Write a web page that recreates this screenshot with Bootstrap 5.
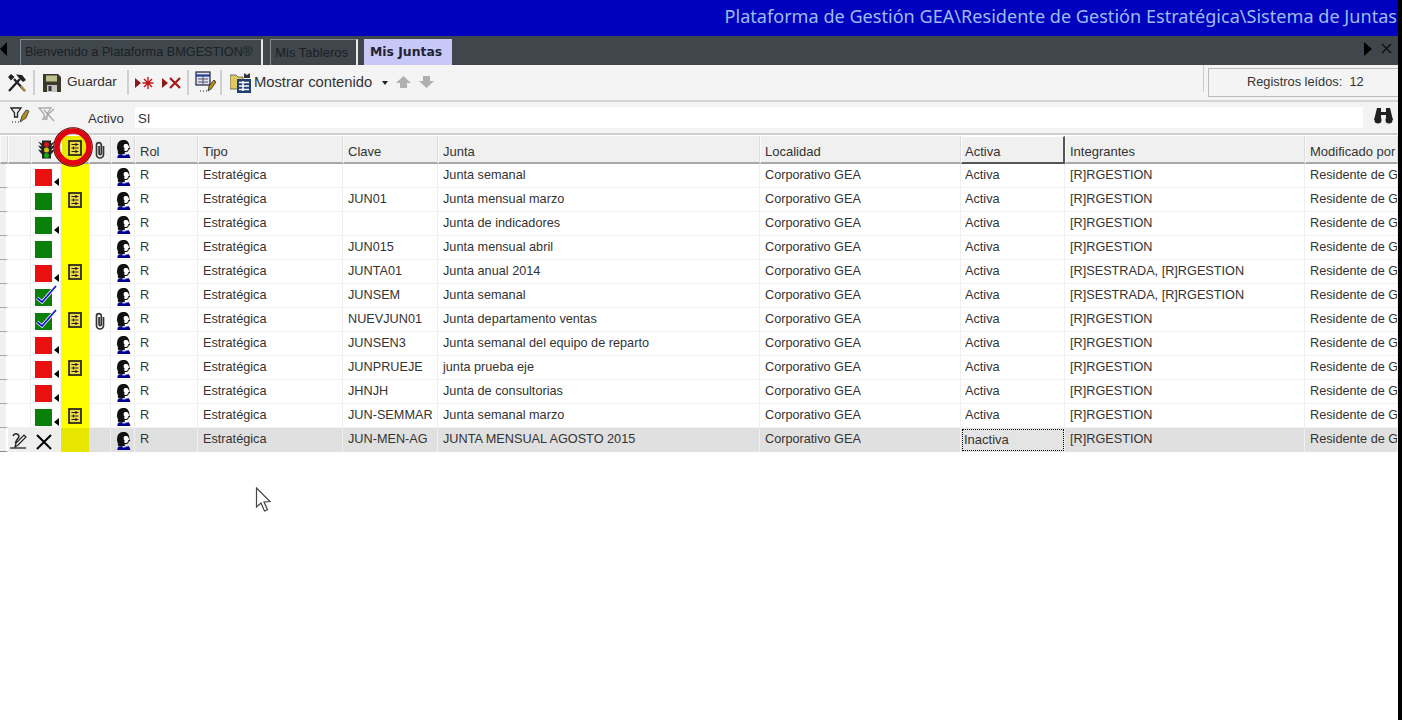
<!DOCTYPE html>
<html lang="es"><head><meta charset="utf-8"><title>Mis Juntas</title>
<link href="https://cdn.jsdelivr.net/npm/bootstrap@5.3.0/dist/css/bootstrap.min.css" rel="stylesheet">
<style>
html,body{height:720px;overflow:hidden;background:#fff}
body{font-family:"Liberation Sans",Arial,sans-serif;font-size:13px;color:#333;position:relative;width:1402px}
.app{width:1398px}
.edge{position:absolute;top:0;right:0;width:4px;height:720px;background:#000}
.ttl{height:36px;background:#0000bf;color:#9dbcec;font-family:"Noto Sans",sans-serif;font-size:18.1px;line-height:33px;padding-right:1px;white-space:nowrap}
.tabbar{height:29px;background:#3f474c;padding:3px 0 0 0}
.tb{height:26px;line-height:25px;font-size:12.7px;padding:0 9px 0 4px;margin-right:7px;color:#1b2024;border-top:1px solid #858d94;border-left:1px solid #858d94;border-right:2px solid #e8e8e8}
.tb2{font-size:13px;padding-right:8px;margin-right:6px}
.tb.on{background:#c8c8f8;color:#223;font-weight:700;border:0;line-height:26px;padding:0 10px 0 6px;font-family:"DejaVu Sans",sans-serif;font-size:12.4px;margin:0}
.arl,.arr,.car{width:0;height:0;border-style:solid;display:block}
.arl{border-width:7px 7px 7px 0;border-color:transparent #000 transparent transparent;margin:3px 13px 0 0}
.arr{border-width:7px 0 7px 8px;border-color:transparent transparent transparent #000;margin:3px 8px 0 auto}
.xcl{margin:3px 5px 0 0}
.car{border-width:4px 3.5px 0;border-color:#222 transparent transparent;margin:1px 0 0 10px}
.tools{height:37px;background:#f4f4f4;border-bottom:2px solid #d4d4d4;color:#333;padding:0 0 0 7px}
.tgu{font-size:13.6px;margin-left:6px}
.tmo{font-size:14.8px;margin-left:3px}
.sepv{width:2px;height:25px;background:#d0d0d0;display:block}
.s1{margin:0 4px 0 6px}.s2{margin:0 6px 0 10px}.s3{margin:0 6px 0 6px}.s4{margin:0 8px 0 4px}
.m8{margin-left:8px}.m4{margin-left:4px}
.cnt{width:190px;height:29px;margin-left:auto;border:1px solid #bbb;border-right:0;background:#f4f4f4;font-size:12.8px;line-height:26px;padding-left:38px;position:relative;top:0;box-shadow:-5px -4px 0 -1px #f4f4f4,-6px -4px 0 -1px #ccc}
.filt{height:33px;background:#f3f3f3;border-bottom:2px solid #cfcfcf;padding-top:5px}
.fval{height:21px;width:1228px;background:#fff;line-height:24px;padding-left:3px;font-size:13.2px;margin-left:11px}
.lbl{font-size:13.2px;line-height:24px;margin-left:30px}
.f1{margin-left:10px}.f2{margin-left:8px}.f3{margin-left:10px}
.grid{table-layout:fixed;border-collapse:separate;border-spacing:0;width:1398px;margin-top:1px}
.grid th,.grid td{padding:0 0 0 5px;overflow:hidden;white-space:nowrap;font-weight:400;font-size:12.7px;vertical-align:top;line-height:23px}
.grid th{height:28px;background:#f0f0f0;border-right:1px solid #dcdcdc;border-bottom:2px solid #a8a8a8;font-size:13px;line-height:21px;padding:5px 0 0 4px;border-left:1px solid #fafafa}
.grid td{height:24px;border-right:1px solid #f0f0f0;border-bottom:1px solid #f2f2f2}
.grid td.ic,.grid th.ic{padding:0;text-align:center;position:relative}
.grid td.mk{background:#f0f0f0;border-bottom:1px solid #a8a8a8;border-right:2px solid #fff;padding:0}
.grid td.ye{background:#ff0;border-bottom-color:#ff0;border-right-color:#ff0}
.grid th.ye{background:#e9e900}
.grid tr.cur td{background:#e0e0e0;border-bottom:0}
.grid tr.cur td.ye{background:#e6e600;border-right-color:#e6e600}
.grid tr.cur td.xc{background:#eee}
.grid tr.cur td.mk{background:#f0f0f0;border-bottom:1px solid #888}
.grid td.est{padding-left:4px}
.grid tr.cur td.dot{outline:1px dotted #000;outline-offset:-2px;background:#e4e4e4;padding-left:3px;font-size:13px}
.grid th.act{border:1px solid #fff;border-right:2px solid #555;border-bottom:2px solid #555;padding:4px 0 0 3px}
.sq{display:block;width:17px;height:17px;margin:5px 0 0 4px}
.red{background:#e81010}.grn{background:#0a800a}
.tri{position:absolute;left:23px;top:14px;width:0;height:0;border:4.5px solid transparent;border-left:0;border-right:5.5px solid #000}
.ring{position:absolute;left:52px;top:126px;pointer-events:none}
.cursorx{position:absolute;left:255px;top:487px}
.i{display:block}
th .i,td.ic .i{margin:0 auto}
th .tl{margin-top:3px}th .nt{margin-top:4px}th .cp{margin-top:5px}th .fc{margin-top:4px}
td.ic .nt{margin-top:4px}
td.ic .cp{margin-top:4px}
td.ic .fc{margin-top:4px;position:relative;left:1px}
th.ic .fc{position:relative;left:1px}
td.ic .ck{margin:0 0 0 4px}
td.ic .ed{margin:3px 0 0 0}
td.ic .xx{margin:6px 0 0 5px}
.c0{width:8px}.c1{width:23px}.c2{width:30px}.c3{width:28px}.c4{width:22px}.c5{width:24px}.c6{width:63px}.c7{width:145px}.c8{width:95px}.c9{width:322px}.c10{width:201px}.c11{width:104px}.c12{width:240px}.c13{width:93px}
</style></head><body>
<svg width="0" height="0" class="position-absolute">
<defs>
<symbol id="note" viewBox="0 0 14 16"><rect x="1" y="1" width="12" height="14" fill="#eedc40" stroke="#222" stroke-width="1.700"/><path d="M3.500 4.500h7M3.500 8h7M3.500 11.500h7" stroke="#222" stroke-width="1.200"/><path d="M8 3v3M5.500 6.500v3M8 10v3" stroke="#222" stroke-width="1.100"/></symbol>
<symbol id="face" viewBox="0 0 14 18"><path d="M7 0C3 0 .5 2 .3 5.500-.5 8 .3 10 1 11.500c-.6 1.500 0 3 2 3.300h4l1-2.500 3-.8.800-2 1.500-.8-1-2.300C12.500 3 10.500 0 7 0z" fill="#111"/><path d="M7 4.500c2-.8 3.800-.5 4.300 1l1.200 2.300-1.500.7c0 1.500-.5 2.500-2.200 2.500-1 0-1.600-.5-1.600-1.500.8-.8.3-1.800-.6-2.300 0-1 .2-1.900.4-2.700z" fill="#fff"/><path d="M1 15l4.500-.5 1.500-1.500 1.500 1.800 3.500-.6L13.500 18H.2z" fill="#000090"/><path d="M5.500 14.800h3" stroke="#fff" stroke-width="1.200"/></symbol>
<symbol id="clip" viewBox="0 0 12 18"><path d="M9.500 5v8.500a3.500 3.500 0 0 1-7 0V4a2.400 2.400 0 0 1 4.800 0v8.500a1.100 1.100 0 0 1-2.200 0V5" fill="none" stroke="#333" stroke-width="1.700"/></symbol>
<symbol id="chk" viewBox="0 0 24 22"><rect x="0" y="5" width="17" height="17" fill="#0a800a"/><path d="M2 14l5 4L21 2" fill="none" stroke="#fff" stroke-width="3.400"/><path d="M2 14l5 4L21 2" fill="none" stroke="#1414d0" stroke-width="1.800"/></symbol>
</defs></svg>
<div class="app">
<div class="ttl text-end">Plataforma de Gestión GEA\Residente de Gestión Estratégica\Sistema de Juntas</div>
<div class="tabbar d-flex align-items-start">
<span class="arl"></span>
<span class="tb">Bienvenido a Plataforma BMGESTION®</span>
<span class="tb tb2">Mis Tableros</span>
<span class="tb on">Mis Juntas</span>
<span class="arr"></span>
<svg class="xcl" width="13" height="13" viewBox="0 0 13 13"><path d="M2 2l9 9M11 2l-9 9" stroke="#111" stroke-width="1.500"/></svg>
</div>
<div class="tools d-flex align-items-center">
<svg width="20" height="20" viewBox="0 0 20 20"><path d="M2 18L13 6M18 18L7 6" stroke="#222" stroke-width="2.300"/><path d="M9 1.500l6 .5 4 5-3 2-4-4zM1 4l3-3 3.500 3L4 7.500z" fill="#222"/><path d="M14 13l4 5" stroke="#b89a30" stroke-width="2"/></svg>
<span class="sepv s1"></span>
<svg class="m4" width="18" height="18" viewBox="0 0 18 18"><path d="M0 0h15l3 3v15H0z" fill="#3a3a2a"/><rect x="3" y="1.500" width="11" height="6" fill="#bfc090"/><rect x="4" y="11" width="10" height="7" fill="#c4c4c4"/><rect x="5.500" y="12" width="3" height="5" fill="#333"/></svg>
<span class="tgu">Guardar</span>
<span class="sepv s2"></span>
<svg width="19" height="14" viewBox="0 0 19 14"><path d="M0 2l6 5-6 5z" fill="#8c1a1a"/><path d="M13 1v12M7.500 7h11M9 3l8 8M17 3l-8 8" stroke="#c01818" stroke-width="1.400"/></svg>
<svg class="m8" width="19" height="14" viewBox="0 0 19 14"><path d="M0 2l6 5-6 5z" fill="#8c1a1a"/><path d="M8 2l10 10M18 2L8 12" stroke="#a81818" stroke-width="2.200"/></svg>
<span class="sepv s3"></span>
<svg width="21" height="23" viewBox="0 0 21 23"><rect x="1" y="1" width="14" height="13" fill="#dfe2f2" stroke="#223" stroke-width="1.200"/><path d="M1 4.500h14" stroke="#223a90" stroke-width="2.200"/><path d="M3 8h10M3 11h10M8 5v8" stroke="#556" stroke-width="1"/><path d="M13 20l1-5 5-6 2 2-5 7z" fill="#b89020" stroke="#222" stroke-width=".8"/><path d="M5 20h1M8 20h1M11 20h1" stroke="#222"/></svg>
<span class="sepv s4"></span>
<svg width="21" height="21" viewBox="0 0 21 21"><path d="M0 3h6l2 2h5v12H0z" fill="#e0c860" stroke="#555" stroke-width=".8"/><rect x="7" y="7" width="14" height="14" fill="#22406e"/><path d="M9 10.500h10M9 14h10M9 17.500h10M13 9v10" stroke="#fff" stroke-width="1.500"/><path d="M14 1l3 2 3-2v5h-6z" fill="#333"/></svg>
<span class="tmo">Mostrar contenido</span>
<span class="car"></span>
<svg class="m8" width="15" height="13" viewBox="0 0 15 13"><path d="M7.500 0L15 7h-4v5H4V7H0z" fill="#b0b0b0"/></svg>
<svg class="m8" width="15" height="13" viewBox="0 0 15 13"><path d="M7.500 12L15 5h-4V0H4v5H0z" fill="#b0b0b0"/></svg>
<div class="cnt">Registros leídos:&nbsp; 12</div>
</div>
<div class="filt d-flex align-items-start">
<svg class="f1" width="20" height="18" viewBox="0 0 20 18"><path d="M1 1h10L7.500 6v4h-3V6z" fill="#eee" stroke="#222" stroke-width="1.300"/><path d="M10 15l2-6 4-6 3 1-3 7z" fill="#b09020" stroke="#222" stroke-width=".7"/><path d="M2 15h1M5 15h1M8 15h1" stroke="#222"/></svg>
<svg class="f2" width="20" height="18" viewBox="0 0 20 18"><path d="M1 1h12L9 7v5H6V7zM4 13L16 2M6 3l10 11" fill="none" stroke="#aaa" stroke-width="1.300"/></svg>
<span class="lbl">Activo</span>
<div class="fval">SI</div>
<svg class="f3" width="21" height="17" viewBox="0 0 21 17"><path d="M4 1h4v4h5V1h4l3 12h-7V8H8v5H1z" fill="#222"/><circle cx="5" cy="13" r="3.500" fill="#222"/><circle cx="16" cy="13" r="3.500" fill="#222"/></svg>
</div>
<table class="grid">
<colgroup><col class="c0"><col class="c1"><col class="c2"><col class="c3"><col class="c4"><col class="c5"><col class="c6"><col class="c7"><col class="c8"><col class="c9"><col class="c10"><col class="c11"><col class="c12"><col class="c13"></colgroup>
<thead><tr><th class="ic"></th><th class="ic"></th>
<th class="ic"><svg class="i tl" width="17" height="22" viewBox="0 0 17 21"><path d="M0 2l4 2V1h9v3l4-2-4 5 4-1-4 5 4-1-4 5v4H4v-4L0 10l4 1L0 6l4 1z" fill="#222"/><circle cx="8.500" cy="5" r="2.500" fill="#d81818"/><circle cx="8.500" cy="10.500" r="2.500" fill="#d8c010"/><circle cx="8.500" cy="16" r="2.500" fill="#10b010"/></svg></th>
<th class="ic ye"><svg class="i nt" width="14" height="16"><use href="#note"/></svg></th>
<th class="ic"><svg class="i cp" width="12" height="18"><use href="#clip"/></svg></th>
<th class="ic"><svg class="i fc" width="14" height="18"><use href="#face"/></svg></th>
<th>Rol</th><th>Tipo</th><th>Clave</th><th>Junta</th><th>Localidad</th><th class="act">Activa</th><th>Integrantes</th><th>Modificado por</th></tr></thead>
<tbody>
<tr><td class="mk"></td><td></td><td class="ic"><span class="sq red"></span><span class="tri"></span></td><td class="ic ye"></td><td class="ic"></td><td class="ic"><svg class="i fc" width="14" height="18"><use href="#face"/></svg></td><td>R</td><td>Estratégica</td><td></td><td>Junta semanal</td><td>Corporativo GEA</td><td class="est">Activa</td><td>[R]RGESTION</td><td>Residente de G</td></tr>
<tr><td class="mk"></td><td></td><td class="ic"><span class="sq grn"></span></td><td class="ic ye"><svg class="i nt" width="14" height="16"><use href="#note"/></svg></td><td class="ic"></td><td class="ic"><svg class="i fc" width="14" height="18"><use href="#face"/></svg></td><td>R</td><td>Estratégica</td><td>JUN01</td><td>Junta mensual marzo</td><td>Corporativo GEA</td><td class="est">Activa</td><td>[R]RGESTION</td><td>Residente de G</td></tr>
<tr><td class="mk"></td><td></td><td class="ic"><span class="sq grn"></span><span class="tri"></span></td><td class="ic ye"></td><td class="ic"></td><td class="ic"><svg class="i fc" width="14" height="18"><use href="#face"/></svg></td><td>R</td><td>Estratégica</td><td></td><td>Junta de indicadores</td><td>Corporativo GEA</td><td class="est">Activa</td><td>[R]RGESTION</td><td>Residente de G</td></tr>
<tr><td class="mk"></td><td></td><td class="ic"><span class="sq grn"></span></td><td class="ic ye"></td><td class="ic"></td><td class="ic"><svg class="i fc" width="14" height="18"><use href="#face"/></svg></td><td>R</td><td>Estratégica</td><td>JUN015</td><td>Junta mensual abril</td><td>Corporativo GEA</td><td class="est">Activa</td><td>[R]RGESTION</td><td>Residente de G</td></tr>
<tr><td class="mk"></td><td></td><td class="ic"><span class="sq red"></span><span class="tri"></span></td><td class="ic ye"><svg class="i nt" width="14" height="16"><use href="#note"/></svg></td><td class="ic"></td><td class="ic"><svg class="i fc" width="14" height="18"><use href="#face"/></svg></td><td>R</td><td>Estratégica</td><td>JUNTA01</td><td>Junta anual 2014</td><td>Corporativo GEA</td><td class="est">Activa</td><td>[R]SESTRADA, [R]RGESTION</td><td>Residente de G</td></tr>
<tr><td class="mk"></td><td></td><td class="ic"><svg class="i ck" width="24" height="22"><use href="#chk"/></svg></td><td class="ic ye"></td><td class="ic"></td><td class="ic"><svg class="i fc" width="14" height="18"><use href="#face"/></svg></td><td>R</td><td>Estratégica</td><td>JUNSEM</td><td>Junta semanal</td><td>Corporativo GEA</td><td class="est">Activa</td><td>[R]SESTRADA, [R]RGESTION</td><td>Residente de G</td></tr>
<tr><td class="mk"></td><td></td><td class="ic"><svg class="i ck" width="24" height="22"><use href="#chk"/></svg></td><td class="ic ye"><svg class="i nt" width="14" height="16"><use href="#note"/></svg></td><td class="ic"><svg class="i cp" width="12" height="18"><use href="#clip"/></svg></td><td class="ic"><svg class="i fc" width="14" height="18"><use href="#face"/></svg></td><td>R</td><td>Estratégica</td><td>NUEVJUN01</td><td>Junta departamento ventas</td><td>Corporativo GEA</td><td class="est">Activa</td><td>[R]RGESTION</td><td>Residente de G</td></tr>
<tr><td class="mk"></td><td></td><td class="ic"><span class="sq red"></span><span class="tri"></span></td><td class="ic ye"></td><td class="ic"></td><td class="ic"><svg class="i fc" width="14" height="18"><use href="#face"/></svg></td><td>R</td><td>Estratégica</td><td>JUNSEN3</td><td>Junta semanal del equipo de reparto</td><td>Corporativo GEA</td><td class="est">Activa</td><td>[R]RGESTION</td><td>Residente de G</td></tr>
<tr><td class="mk"></td><td></td><td class="ic"><span class="sq red"></span><span class="tri"></span></td><td class="ic ye"><svg class="i nt" width="14" height="16"><use href="#note"/></svg></td><td class="ic"></td><td class="ic"><svg class="i fc" width="14" height="18"><use href="#face"/></svg></td><td>R</td><td>Estratégica</td><td>JUNPRUEJE</td><td>junta prueba eje</td><td>Corporativo GEA</td><td class="est">Activa</td><td>[R]RGESTION</td><td>Residente de G</td></tr>
<tr><td class="mk"></td><td></td><td class="ic"><span class="sq red"></span><span class="tri"></span></td><td class="ic ye"></td><td class="ic"></td><td class="ic"><svg class="i fc" width="14" height="18"><use href="#face"/></svg></td><td>R</td><td>Estratégica</td><td>JHNJH</td><td>Junta de consultorias</td><td>Corporativo GEA</td><td class="est">Activa</td><td>[R]RGESTION</td><td>Residente de G</td></tr>
<tr><td class="mk"></td><td></td><td class="ic"><span class="sq grn"></span><span class="tri"></span></td><td class="ic ye"><svg class="i nt" width="14" height="16"><use href="#note"/></svg></td><td class="ic"></td><td class="ic"><svg class="i fc" width="14" height="18"><use href="#face"/></svg></td><td>R</td><td>Estratégica</td><td>JUN-SEMMAR</td><td>Junta semanal marzo</td><td>Corporativo GEA</td><td class="est">Activa</td><td>[R]RGESTION</td><td>Residente de G</td></tr>
<tr class="cur"><td class="mk"></td><td class="ic xc"><svg class="i ed" width="20" height="20" viewBox="0 0 20 20"><path d="M2 17h16" stroke="#222" stroke-width="1.300"/><path d="M5 5c1-3 5-3 6 0 0 3-3 3-3 6l-1 1" fill="none" stroke="#222" stroke-width="1.500"/><path d="M7 16l1-4 8-8 2 2-8 8z" fill="none" stroke="#222" stroke-width="1.200"/></svg></td><td class="ic xc"><svg class="i xx" width="16" height="16" viewBox="0 0 16 16"><path d="M1 1l14 14M15 1L1 15" stroke="#000" stroke-width="2"/></svg></td><td class="ic ye"></td><td class="ic"></td><td class="ic"><svg class="i fc" width="14" height="18"><use href="#face"/></svg></td><td>R</td><td>Estratégica</td><td>JUN-MEN-AG</td><td>JUNTA MENSUAL AGOSTO 2015</td><td>Corporativo GEA</td><td class="dot">Inactiva</td><td>[R]RGESTION</td><td>Residente de G</td></tr>
</tbody></table>
</div>
<svg class="ring" width="42" height="42" viewBox="0 0 42 42"><circle cx="21" cy="21" r="16" fill="none" stroke="#e00010" stroke-width="5.500"/><circle cx="21" cy="21" r="19.300" fill="none" stroke="#600" stroke-width="1.100"/></svg>
<svg class="cursorx" width="18" height="26" viewBox="0 0 18 26"><path d="M1.500 1v19l4.500-4 3.500 8 3-1.300-3.500-7.700 6-.4z" fill="#fff" stroke="#444" stroke-width="1.200"/></svg>
<div class="edge"></div>
<script src="https://cdn.jsdelivr.net/npm/bootstrap@5.3.0/dist/js/bootstrap.bundle.min.js"></script>
</body></html>
